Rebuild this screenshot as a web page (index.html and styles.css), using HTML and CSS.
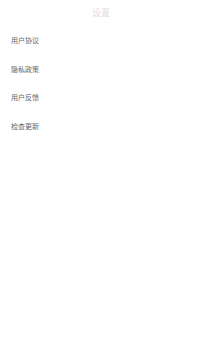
FILE: index.html
```html
<!DOCTYPE html>
<html lang="zh">

<head>
  <meta charset="UTF-8">
  <title>设置</title>
  <link rel="stylesheet" href="styles.css">
</head>

<body>
  <div class="header">设置</div>

  <ul class="menu">
    <li>用户协议</li>
    <li>隐私政策</li>
    <li>用户反馈</li>
    <li>检查更新</li>
  </ul>
</body>

</html>
```

FILE: styles.css
```css
body {
  margin: 0;
  font-family: "Noto Sans CJK SC", sans-serif;
  background: #fff;
}

.header {
  height: 26px;
  line-height: 26px;
  text-align: center;
  font-size: 9px;
  color: #e3dcdc;
}

.menu {
  list-style: none;
  margin: 0;
  padding: 0 11px;
}

.menu li {
  height: 28.5px;
  line-height: 28.5px;
  font-size: 7px;
  color: #666;
}
```
